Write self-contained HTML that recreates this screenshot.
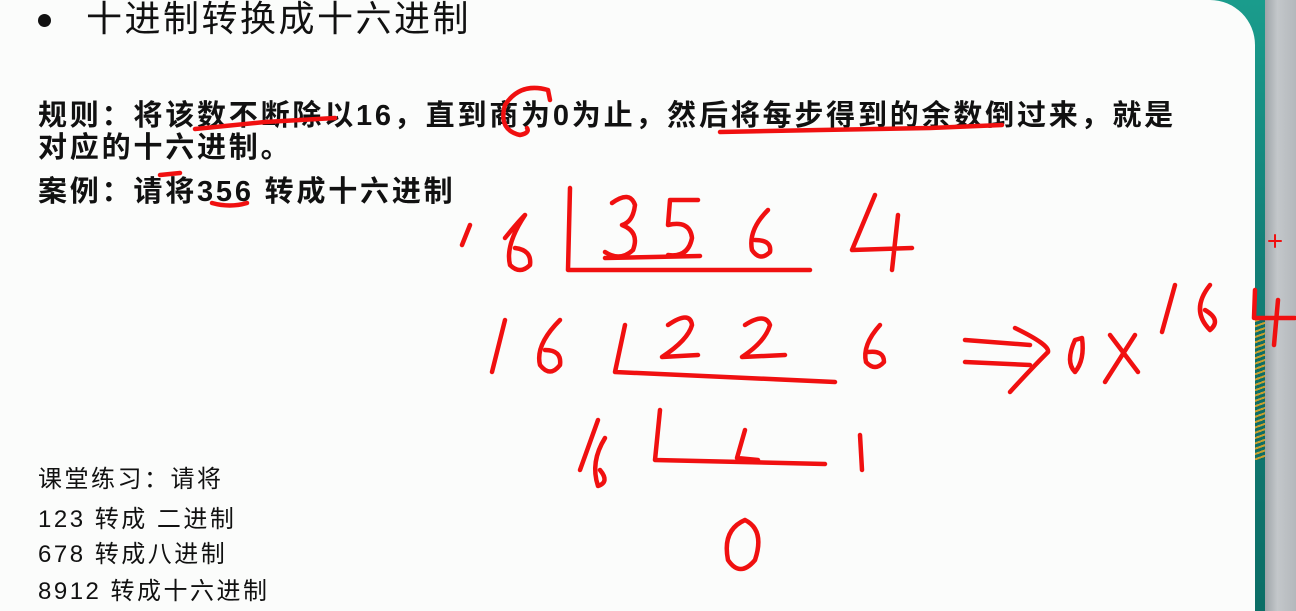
<!DOCTYPE html>
<html><head><meta charset="utf-8"><style>
body{margin:0;width:1296px;height:611px;overflow:hidden;background:#fbfcfb;position:relative;font-family:"Liberation Sans","Noto Sans CJK SC",sans-serif;color:#111}
.t{position:absolute;white-space:nowrap}
.b{font-weight:bold;font-size:29px;letter-spacing:2.8px}
.s{font-size:24px;letter-spacing:2.5px}
</style></head><body>
<div style="position:absolute;left:1150px;top:0;width:115px;height:611px;background:linear-gradient(#1a9c8c,#138078 40%,#0b6e66)"></div>
<div style="position:absolute;left:1100px;top:0;width:155px;height:611px;background:#fbfcfb;border-top-right-radius:45px"></div>
<div style="position:absolute;left:1265px;top:0;width:31px;height:611px;background:linear-gradient(90deg,#9ea4a8,#c3c7ca 40%,#b4b8bc)"></div>
<div style="position:absolute;left:1255px;top:320px;width:10px;height:140px;background:repeating-linear-gradient(160deg,#c9a030 0 2px,#0d6e66 2px 5px)"></div>
<div class="t" style="left:38px;top:14px;width:13px;height:13px;border-radius:50%;background:#111"></div>
<div class="t" style="left:86px;top:-10px;font-size:36px;letter-spacing:2.5px">十进制转换成十六进制</div>
<div class="t b" style="left:38px;top:92px">规则：将该数不断除以16，直到商为0为止，然后将每步得到的余数倒过来，就是</div>
<div class="t b" style="left:38px;top:124px">对应的十六进制。</div>
<div class="t b" style="left:38px;top:168px">案例：请将356 转成十六进制</div>
<div class="t s" style="left:38px;top:459px">课堂练习：请将</div>
<div class="t s" style="left:38px;top:499px">123 转成 二进制</div>
<div class="t s" style="left:38px;top:534px">678 转成八进制</div>
<div class="t s" style="left:38px;top:571px">8912 转成十六进制</div>
<svg style="position:absolute;left:0;top:0" width="1296" height="611" fill="none" stroke="#f01010" stroke-width="4.5" stroke-linecap="round" stroke-linejoin="round">
<path d="M195 129 L265 122 L335 118"/>
<path d="M720 132 L820 130 L930 128 L1002 125"/>
<path d="M548 90 Q520 82 505 105 Q498 130 520 135 Q530 133 527 128 M548 90 L550 100"/>
<path d="M160 175 L180 173"/>
<path d="M212 203 Q230 208 247 203"/>
<path d="M470 225 L462 245 M505 238 Q518 222 525 215 Q505 245 510 265 Q520 275 530 265 Q532 250 515 248"/>
<path d="M570 188 L568 270 L810 270"/>
<path d="M612 203 Q630 190 635 205 Q633 222 622 225 Q640 232 633 250 Q620 262 605 252"/>
<path d="M698 200 L670 200 L668 225 Q690 220 692 238 Q688 258 668 255"/>
<path d="M605 258 L700 256"/>
<path d="M768 210 Q748 230 752 250 Q760 262 770 252 Q772 240 755 240"/>
<path d="M875 195 L852 250 L912 248 M898 215 L892 270"/>
<path d="M505 320 L492 372 M560 320 Q535 345 540 365 Q550 378 560 365 Q562 350 545 350"/>
<path d="M625 325 L615 372 L835 382"/>
<path d="M668 325 Q690 310 692 325 Q688 340 662 357 L698 355"/>
<path d="M745 325 Q765 312 770 325 Q765 342 742 357 L785 355"/>
<path d="M880 325 Q862 345 866 362 Q875 372 884 362 Q884 350 868 352"/>
<path d="M965 340 L1030 345 M965 362 L1030 365 M1015 328 Q1050 345 1048 352 Q1030 370 1010 392"/>
<path d="M1075 340 Q1065 362 1075 372 Q1085 360 1082 338 Z"/>
<path d="M1110 335 L1138 372 M1135 335 L1105 382"/>
<path d="M1175 285 L1162 332"/>
<path d="M1210 285 Q1190 310 1210 330 Q1222 320 1205 310"/>
<path d="M1255 290 L1254 318 L1295 318 M1278 300 L1274 345"/>
<path d="M598 420 L580 470 M605 438 Q590 462 598 486 Q610 482 600 470"/>
<path d="M660 410 L655 460 L825 464"/>
<path d="M745 430 L737 458 L758 460"/>
<path d="M860 435 L862 470"/>
<path d="M745 520 Q722 530 728 560 Q740 578 755 560 Q765 530 745 520"/>
<path d="M1269 241 L1281 241 M1275 235 L1275 247" stroke-width="2"/>
</svg>
</body></html>
